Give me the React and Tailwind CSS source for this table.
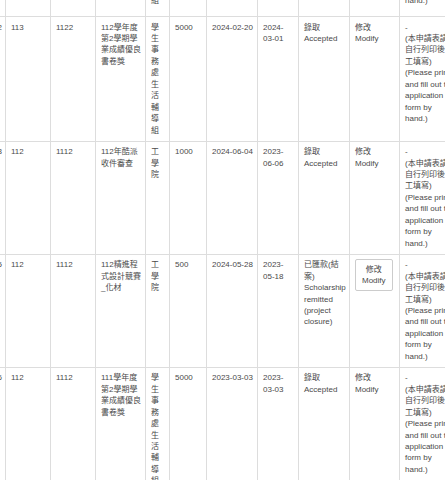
import React from "react";

const NOTES = ["-", "(本申請表請", "自行列印後手", "工填寫)", "(Please print", "and fill out the", "application", "form by", "hand.)"];

const rows = [
  {
    id: "1",
    y: "113",
    t: "1122",
    name: ["112學年度", "第2學期學", "業成績優良", "書卷獎"],
    unit: "學生事務處生活輔導組",
    amt: "5000",
    d1: "2024-02-20",
    d2: ["2024-", "03-01"],
    status: ["錄取", "Accepted"],
    btn: false,
  },
  {
    id: "2",
    y: "113",
    t: "1122",
    name: ["112學年度", "第2學期學", "業成績優良", "書卷獎"],
    unit: "學生事務處生活輔導組",
    amt: "5000",
    d1: "2024-02-20",
    d2: ["2024-", "03-01"],
    status: ["錄取", "Accepted"],
    btn: false,
  },
  {
    id: "3",
    y: "112",
    t: "1112",
    name: ["112年酷派", "收件審查"],
    unit: "工學院",
    amt: "1000",
    d1: "2024-06-04",
    d2: ["2023-", "06-06"],
    status: ["錄取", "Accepted"],
    btn: false,
  },
  {
    id: "5",
    y: "112",
    t: "1112",
    name: ["112精進程", "式設計競賽", "_化材"],
    unit: "工學院",
    amt: "500",
    d1: "2024-05-28",
    d2: ["2023-", "05-18"],
    status: ["已匯款(結", "案)", "Scholarship", "remitted", "(project", "closure)"],
    btn: true,
  },
  {
    id: "6",
    y: "112",
    t: "1112",
    name: ["111學年度", "第2學期學", "業成績優良", "書卷獎"],
    unit: "學生事務處生活輔導組",
    amt: "5000",
    d1: "2023-03-03",
    d2: ["2023-", "03-03"],
    status: ["錄取", "Accepted"],
    btn: false,
  },
];

function Lines({ items }) {
  return (
    <>
      {items.map((l, i) => (
        <div key={i} className="whitespace-nowrap">
          {l}
        </div>
      ))}
    </>
  );
}

export default function App() {
  const td = "border border-[#dddddd] align-top px-[5px] py-[4.6px]";
  return (
    <div
      className="w-[445px] h-[480px] overflow-hidden bg-white text-[#4a4a4a] text-[8px] leading-[11.43px]"
      style={{ fontFamily: '"Liberation Sans", Arial, "Noto Sans CJK TC", sans-serif' }}
    >
      <table className="-ml-[25px] -mt-[114px] w-[486px] table-fixed border-collapse">
        <colgroup>
          <col className="w-[30px]" />
          <col className="w-[45px]" />
          <col className="w-[45px]" />
          <col className="w-[50px]" />
          <col className="w-[24px]" />
          <col className="w-[37px]" />
          <col className="w-[51px]" />
          <col className="w-[41px]" />
          <col className="w-[51px]" />
          <col className="w-[50px]" />
          <col className="w-[62px]" />
        </colgroup>
        <tbody>
          {rows.map((r, i) => {
            const cell = i === 0 ? td + " pb-[10px]" : td;
            return (
              <tr key={i}>
                <td className={cell + " text-right pr-[3px]"}>{r.id}</td>
                <td className={cell}>{r.y}</td>
                <td className={cell}>{r.t}</td>
                <td className={cell}>
                  <Lines items={r.name} />
                </td>
                <td className={cell}>
                  {r.unit.split("").map((c, k) => (
                    <div key={k}>{c}</div>
                  ))}
                </td>
                <td className={cell}>{r.amt}</td>
                <td className={cell + " whitespace-nowrap"}>{r.d1}</td>
                <td className={cell}>
                  <Lines items={r.d2} />
                </td>
                <td className={cell}>
                  <Lines items={r.status} />
                </td>
                <td className={cell}>
                  {r.btn ? (
                    <div className="inline-block border border-[#cccccc] rounded-[2px] bg-white px-[6px] py-[3.4px] text-center">
                      <div>修改</div>
                      <div>Modify</div>
                    </div>
                  ) : (
                    <Lines items={["修改", "Modify"]} />
                  )}
                </td>
                <td className={cell}>
                  <Lines items={i === 0 ? ["-", ...NOTES] : NOTES} />
                </td>
              </tr>
            );
          })}
        </tbody>
      </table>
    </div>
  );
}
